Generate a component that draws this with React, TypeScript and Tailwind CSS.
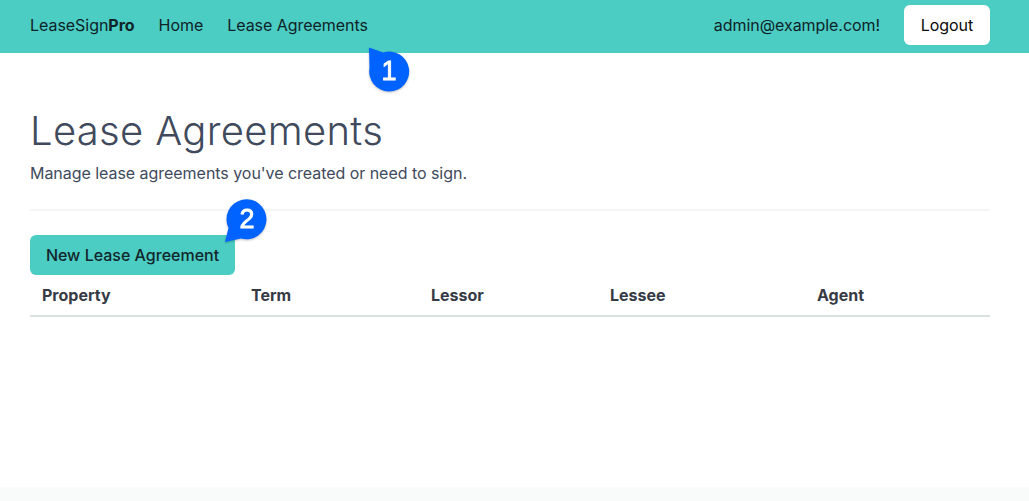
const font = { fontFamily: '"Inter", "Liberation Sans", sans-serif' };

// callout marker with a tail pointing to the annotated element
function Marker({ n, d, x, className }: { n: number; d: string; x: number; className: string }) {
  return (
    <div className={`absolute w-[48px] h-[48px] drop-shadow-[0_1px_1px_rgba(0,0,0,0.25)] ${className}`}>
      <svg width="48" height="48" viewBox="0 0 48 48">
        <path d={d} fill="#0062ff" />
        <text x={x} y="33" textAnchor="middle" fontSize="27" fill="#ffffff" stroke="#ffffff" strokeWidth="0.8" fontFamily='"Liberation Sans", sans-serif'>{n}</text>
      </svg>
    </div>
  );
}

export default function App() {
  const columns = [
    { label: 'Property', width: 'w-[209px]' },
    { label: 'Term', width: 'w-[180px]' },
    { label: 'Lessor', width: 'w-[179px]' },
    { label: 'Lessee', width: 'w-[207px]' },
    { label: 'Agent', width: 'w-[185px]' },
  ];

  return (
    <div className="relative min-h-screen flex flex-col bg-white text-[#404a5c] overflow-hidden" style={font}>
      {/* 상단 내비게이션 */}
      <nav className="h-[53px] bg-[#4bcdc3] flex items-center justify-between pl-[30px] pr-[39px] pb-[3px] text-base text-[#0f2328] tracking-[-0.04px]">
        <div className="flex items-center gap-6">
          <span>LeaseSign<b className="font-bold">Pro</b></span>
          <span>Home</span>
          <span>Lease Agreements</span>
        </div>
        <div className="flex items-center gap-6">
          <span className="tracking-[-0.06px]">admin@example.com!</span>
          <button className="h-10 w-[86px] bg-white rounded-md text-base text-[#0a0a0a]">Logout</button>
        </div>
      </nav>

      <main className="flex-1 pl-[30px] pr-[39px] pt-[50px]">
        <h1 className="text-[40px] leading-[56px] font-light text-[#404a5c] tracking-[0.33px]">Lease Agreements</h1>
        <p className="text-base leading-6 mt-[2px] tracking-[-0.04px]">Manage lease agreements you've created or need to sign.</p>
        <hr className="border-0 h-[2px] bg-[#f3f6f5] mt-[24px] mb-[24px]" />
        <button className="h-10 w-[205px] bg-[#4bcdc3] rounded-md text-base font-medium text-[#12262b]">New Lease Agreement</button>
        <div className="flex h-[42px] items-center border-b-2 border-[#d8e3e1] text-base font-bold text-[#363a45]">
          {columns.map(col => (
            <div key={col.label} className={`${col.width} pl-3`}>{col.label}</div>
          ))}
        </div>
      </main>

      <footer className="h-[14px] bg-[#f9fafa]" />

      <Marker n={1} x={20} d="M0 0.5 L14 5.5 A20 20 0 1 1 0.5 21 Z" className="left-[369px] top-[47px]" />
      <Marker n={2} x={22} d="M0 47 L3.5 33 A20 20 0 1 1 16 43.5 Z" className="left-[225px] top-[195px]" />
    </div>
  );
}
